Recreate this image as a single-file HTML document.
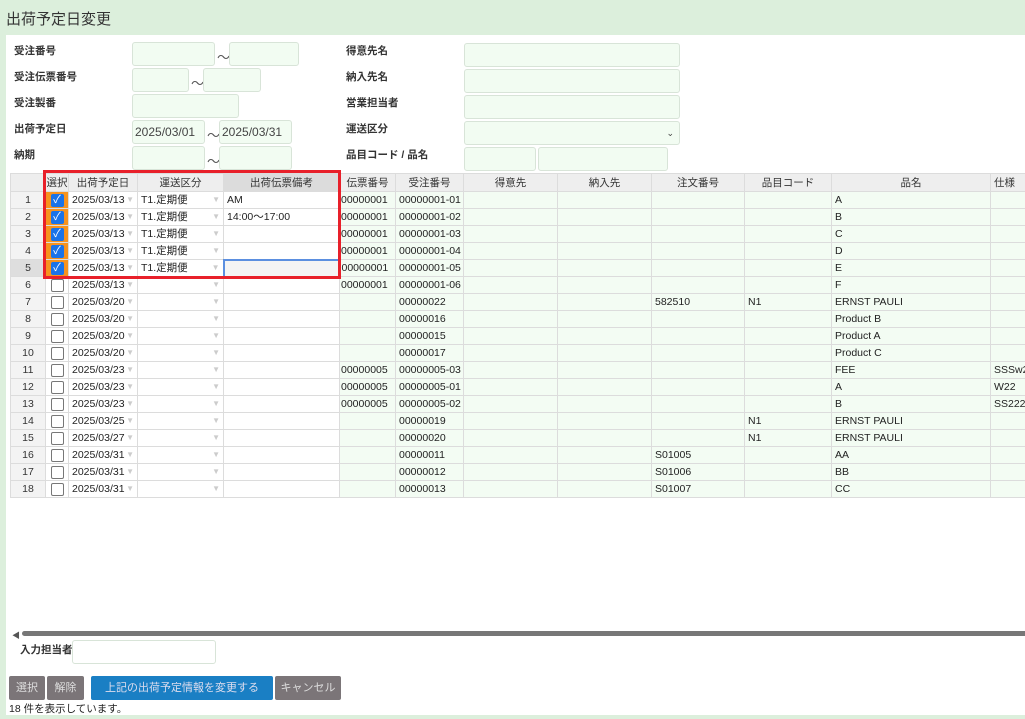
<!DOCTYPE html>
<html><head><meta charset="utf-8"><style>
*{box-sizing:border-box}
body{margin:0;width:1025px;height:719px;overflow:hidden;background:#dcefdc;font-family:"Liberation Sans","Noto Sans CJK JP",sans-serif;font-size:11px;color:#222;position:relative}
.main{position:absolute;left:6px;top:35px;width:1019px;height:680px;background:#fff}
.t{position:absolute;left:6px;top:8px;font-size:15px;color:#333}
.lb{position:absolute;font-weight:bold;font-size:10.5px;color:#333}
.in{position:absolute;background:#f2fcf2;border:1px solid #d8e4d8;border-radius:3px;height:24px;font-size:12px;color:#444;padding:0 2px;line-height:22px}
.tl{position:absolute;font-size:13px;color:#555}
table{position:absolute;left:10px;top:173px;border-collapse:collapse;table-layout:fixed;width:1040px}
td,th{border:1px solid #dcdcdc;height:17px;padding:0 3px;font-size:10.5px;white-space:nowrap;overflow:hidden;background:#f3fcf3;line-height:14px}
th{background:#eeeeee;font-weight:normal;color:#333;height:18px;font-size:10.5px}
td.n{background:#f3f3f3;text-align:center;color:#333}
td.w{background:#fff}
td.c{background:#fff;padding:0;text-align:center}
td.co{background:#f7931e;padding:0;text-align:center}
.cb{display:inline-block;width:13px;height:13px;border:1px solid #777;border-radius:2px;background:#fff;vertical-align:middle}
.ck{display:inline-block;width:13px;height:13px;border-radius:2px;background:#1a73e8;vertical-align:middle;color:#fff;font-size:11px;line-height:13px}
.ar{float:right;color:#ccc;font-size:8px;line-height:14px}
.btn{position:absolute;top:676px;height:24px;color:#ddd;font-size:11px;text-align:center;line-height:24px;background:#7b7578;border-radius:2px}
</style></head><body>
<div class="t">出荷予定日変更</div>
<div class="main"></div>
<div class="lb" style="left:14px;top:43px">受注番号</div>
<div class="lb" style="left:14px;top:69px">受注伝票番号</div>
<div class="lb" style="left:14px;top:95px">受注製番</div>
<div class="lb" style="left:14px;top:121px">出荷予定日</div>
<div class="lb" style="left:14px;top:147px">納期</div>
<div class="in" style="left:132px;top:42px;width:83px"></div><div class="tl" style="left:217px;top:47px">～</div><div class="in" style="left:229px;top:42px;width:70px"></div>
<div class="in" style="left:132px;top:68px;width:57px"></div><div class="tl" style="left:191px;top:73px">～</div><div class="in" style="left:203px;top:68px;width:58px"></div>
<div class="in" style="left:132px;top:94px;width:107px"></div>
<div class="in" style="left:132px;top:120px;width:73px">2025/03/01</div><div class="tl" style="left:207px;top:125px">～</div><div class="in" style="left:219px;top:120px;width:73px">2025/03/31</div>
<div class="in" style="left:132px;top:146px;width:73px"></div><div class="tl" style="left:207px;top:151px">～</div><div class="in" style="left:219px;top:146px;width:73px"></div>
<div class="lb" style="left:346px;top:43px">得意先名</div>
<div class="lb" style="left:346px;top:69px">納入先名</div>
<div class="lb" style="left:346px;top:95px">営業担当者</div>
<div class="lb" style="left:346px;top:121px">運送区分</div>
<div class="lb" style="left:346px;top:147px">品目コード / 品名</div>
<div class="in" style="left:464px;top:43px;width:216px"></div>
<div class="in" style="left:464px;top:69px;width:216px"></div>
<div class="in" style="left:464px;top:95px;width:216px"></div>
<div class="in" style="left:464px;top:121px;width:216px;text-align:right;font-size:9px;padding-right:5px">⌄</div>
<div class="in" style="left:464px;top:147px;width:72px"></div><div class="in" style="left:538px;top:147px;width:130px"></div>
<table>
<colgroup><col style="width:35px"><col style="width:23px"><col style="width:69px"><col style="width:86px"><col style="width:116px"><col style="width:56px"><col style="width:68px"><col style="width:94px"><col style="width:94px"><col style="width:93px"><col style="width:87px"><col style="width:159px"><col style="width:60px"></colgroup>
<tr><th style="background:#eee"></th><th style="padding:0">選択</th><th>出荷予定日</th><th>運送区分</th><th style="background:#dcdcdc">出荷伝票備考</th><th>伝票番号</th><th>受注番号</th><th>得意先</th><th>納入先</th><th>注文番号</th><th>品目コード</th><th>品名</th><th style="text-align:left">仕様</th></tr>
<tr><td class="n">1</td><td class="co"><span class="ck">✓</span></td><td class="w">2025/03/13<span class="ar">▼</span></td><td class="w">T1.定期便<span class="ar">▼</span></td><td class="w">AM</td><td style="padding:0 1px">00000001</td><td>00000001-01</td><td></td><td></td><td></td><td></td><td>A</td><td></td></tr>
<tr><td class="n">2</td><td class="co"><span class="ck">✓</span></td><td class="w">2025/03/13<span class="ar">▼</span></td><td class="w">T1.定期便<span class="ar">▼</span></td><td class="w">14:00～17:00</td><td style="padding:0 1px">00000001</td><td>00000001-02</td><td></td><td></td><td></td><td></td><td>B</td><td></td></tr>
<tr><td class="n">3</td><td class="co"><span class="ck">✓</span></td><td class="w">2025/03/13<span class="ar">▼</span></td><td class="w">T1.定期便<span class="ar">▼</span></td><td class="w"></td><td style="padding:0 1px">00000001</td><td>00000001-03</td><td></td><td></td><td></td><td></td><td>C</td><td></td></tr>
<tr><td class="n">4</td><td class="co"><span class="ck">✓</span></td><td class="w">2025/03/13<span class="ar">▼</span></td><td class="w">T1.定期便<span class="ar">▼</span></td><td class="w"></td><td style="padding:0 1px">00000001</td><td>00000001-04</td><td></td><td></td><td></td><td></td><td>D</td><td></td></tr>
<tr><td class="n" style="background:#dedede">5</td><td class="co"><span class="ck">✓</span></td><td class="w">2025/03/13<span class="ar">▼</span></td><td class="w">T1.定期便<span class="ar">▼</span></td><td class="w" style="border:2px solid #5b8fe0;background:#f4f4f4"></td><td style="padding:0 1px">00000001</td><td>00000001-05</td><td></td><td></td><td></td><td></td><td>E</td><td></td></tr>
<tr><td class="n">6</td><td class="c"><span class="cb"></span></td><td class="w">2025/03/13<span class="ar">▼</span></td><td class="w"><span class="ar">▼</span></td><td class="w"></td><td style="padding:0 1px">00000001</td><td>00000001-06</td><td></td><td></td><td></td><td></td><td>F</td><td></td></tr>
<tr><td class="n">7</td><td class="c"><span class="cb"></span></td><td class="w">2025/03/20<span class="ar">▼</span></td><td class="w"><span class="ar">▼</span></td><td class="w"></td><td></td><td>00000022</td><td></td><td></td><td>582510</td><td>N1</td><td>ERNST PAULI</td><td></td></tr>
<tr><td class="n">8</td><td class="c"><span class="cb"></span></td><td class="w">2025/03/20<span class="ar">▼</span></td><td class="w"><span class="ar">▼</span></td><td class="w"></td><td></td><td>00000016</td><td></td><td></td><td></td><td></td><td>Product B</td><td></td></tr>
<tr><td class="n">9</td><td class="c"><span class="cb"></span></td><td class="w">2025/03/20<span class="ar">▼</span></td><td class="w"><span class="ar">▼</span></td><td class="w"></td><td></td><td>00000015</td><td></td><td></td><td></td><td></td><td>Product A</td><td></td></tr>
<tr><td class="n">10</td><td class="c"><span class="cb"></span></td><td class="w">2025/03/20<span class="ar">▼</span></td><td class="w"><span class="ar">▼</span></td><td class="w"></td><td></td><td>00000017</td><td></td><td></td><td></td><td></td><td>Product C</td><td></td></tr>
<tr><td class="n">11</td><td class="c"><span class="cb"></span></td><td class="w">2025/03/23<span class="ar">▼</span></td><td class="w"><span class="ar">▼</span></td><td class="w"></td><td style="padding:0 1px">00000005</td><td>00000005-03</td><td></td><td></td><td></td><td></td><td>FEE</td><td>SSSw22</td></tr>
<tr><td class="n">12</td><td class="c"><span class="cb"></span></td><td class="w">2025/03/23<span class="ar">▼</span></td><td class="w"><span class="ar">▼</span></td><td class="w"></td><td style="padding:0 1px">00000005</td><td>00000005-01</td><td></td><td></td><td></td><td></td><td>A</td><td>W22</td></tr>
<tr><td class="n">13</td><td class="c"><span class="cb"></span></td><td class="w">2025/03/23<span class="ar">▼</span></td><td class="w"><span class="ar">▼</span></td><td class="w"></td><td style="padding:0 1px">00000005</td><td>00000005-02</td><td></td><td></td><td></td><td></td><td>B</td><td>SS222</td></tr>
<tr><td class="n">14</td><td class="c"><span class="cb"></span></td><td class="w">2025/03/25<span class="ar">▼</span></td><td class="w"><span class="ar">▼</span></td><td class="w"></td><td></td><td>00000019</td><td></td><td></td><td></td><td>N1</td><td>ERNST PAULI</td><td></td></tr>
<tr><td class="n">15</td><td class="c"><span class="cb"></span></td><td class="w">2025/03/27<span class="ar">▼</span></td><td class="w"><span class="ar">▼</span></td><td class="w"></td><td></td><td>00000020</td><td></td><td></td><td></td><td>N1</td><td>ERNST PAULI</td><td></td></tr>
<tr><td class="n">16</td><td class="c"><span class="cb"></span></td><td class="w">2025/03/31<span class="ar">▼</span></td><td class="w"><span class="ar">▼</span></td><td class="w"></td><td></td><td>00000011</td><td></td><td></td><td>S01005</td><td></td><td>AA</td><td></td></tr>
<tr><td class="n">17</td><td class="c"><span class="cb"></span></td><td class="w">2025/03/31<span class="ar">▼</span></td><td class="w"><span class="ar">▼</span></td><td class="w"></td><td></td><td>00000012</td><td></td><td></td><td>S01006</td><td></td><td>BB</td><td></td></tr>
<tr><td class="n">18</td><td class="c"><span class="cb"></span></td><td class="w">2025/03/31<span class="ar">▼</span></td><td class="w"><span class="ar">▼</span></td><td class="w"></td><td></td><td>00000013</td><td></td><td></td><td>S01007</td><td></td><td>CC</td><td></td></tr>
</table>
<div style="position:absolute;left:43px;top:170px;width:298px;height:109px;border:3px solid #e8202a"></div>
<div style="position:absolute;left:12px;top:630px;font-size:8px;color:#555">◀</div>
<div style="position:absolute;left:22px;top:631px;width:1010px;height:5px;background:#777;border-radius:3px"></div>
<div class="lb" style="left:20px;top:642px">入力担当者</div>
<div class="in" style="left:72px;top:640px;width:144px;background:#fff"></div>
<div class="btn" style="left:9px;width:36px">選択</div>
<div class="btn" style="left:47px;width:37px">解除</div>
<div class="btn" style="left:91px;width:182px;background:#1a7fc4;color:#dde">上記の出荷予定情報を変更する</div>
<div class="btn" style="left:275px;width:66px">キャンセル</div>
<div style="position:absolute;left:9px;top:701px;font-size:10.5px">18 件を表示しています。</div>
<div style="position:absolute;left:0;top:715px;width:1025px;height:4px;background:#dcefdc"></div>
</body></html>
